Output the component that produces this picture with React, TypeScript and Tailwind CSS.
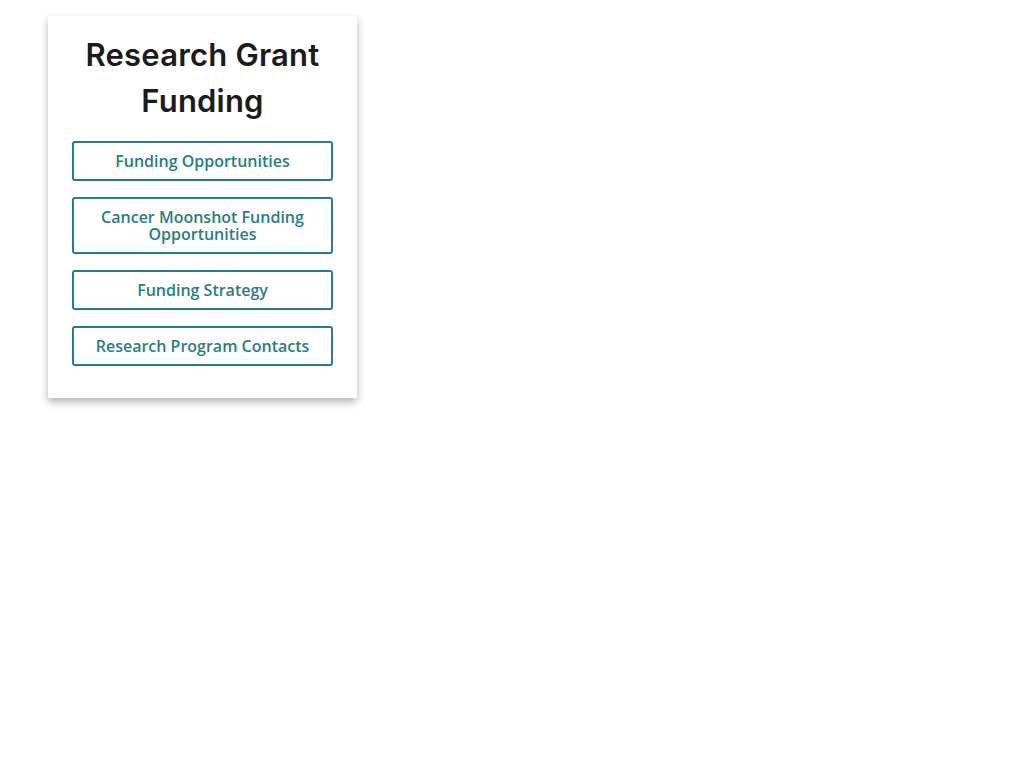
const links = [
  'Funding Opportunities',
  'Cancer Moonshot Funding Opportunities',
  'Funding Strategy',
  'Research Program Contacts',
];

export default function App() {
  return (
    <div className="min-h-screen bg-white pt-4 pl-12">
      <div className="w-[309px] bg-white px-6 pt-4 pb-8 shadow-[0_4px_8px_rgba(0,0,0,0.3)]">
        <h2 className="mb-[17px] text-center font-['Inter',sans-serif] text-[31px] font-semibold leading-[46px] tracking-[0.2px] text-[#1b1b1b]">
          Research Grant Funding
        </h2>
        <div className="flex flex-col gap-4">
          {links.map((label) => (
            <a
              key={label}
              href="#"
              className="block rounded-[3px] border-2 border-[#2b7e7f] px-3 py-[9.5px] text-center font-['Open_Sans',sans-serif] text-base font-semibold leading-[17px] text-[#2b7e7f]"
            >
              {label}
            </a>
          ))}
        </div>
      </div>
    </div>
  );
}
